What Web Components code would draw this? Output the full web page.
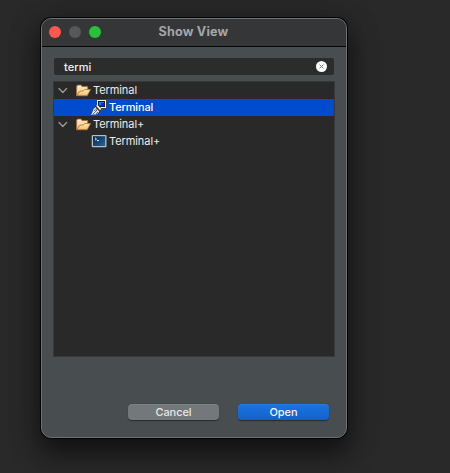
<!DOCTYPE html>
<html lang="en"><head><meta charset="utf-8"><title>Show View</title>
<style>
html,body{margin:0;height:100%;overflow:hidden}
body{background:#292929;font-family:Inter,"Liberation Sans",sans-serif;font-size:11px;color:#ececec;padding:18px 0 0 41px;box-sizing:border-box}
</style></head><body>
<dialog-window heading="Show View">
 <search-field value="termi"></search-field>
 <view-tree>
  <tree-row icon="folder" expanded>Terminal</tree-row>
  <tree-row icon="pen" selected>Terminal</tree-row>
  <tree-row icon="folder" expanded>Terminal+</tree-row>
  <tree-row icon="console">Terminal+</tree-row>
 </view-tree>
 <push-button slot="actions">Cancel</push-button>
 <push-button slot="actions" primary>Open</push-button>
</dialog-window>
<script>
class Base extends HTMLElement{
  connectedCallback(){ if(!this.shadowRoot) this.attachShadow({mode:'open'}).innerHTML=this.view(); }
}
customElements.define('dialog-window',class extends Base{view(){return `<style>
:host{display:flex;flex-direction:column;box-sizing:border-box;width:306px;height:420px;border:1px solid #6c7071;border-radius:10px;background:#484d4f;box-shadow:0 0 0 1px #050505,0 14px 26px 2px rgba(0,0,0,.5),0 2px 34px rgba(0,0,0,.22);overflow:hidden}
header{display:grid;grid-template-columns:76px 1fr 76px;height:27px;background:#353638;border-bottom:1px solid #050505;flex:none;align-items:center}
.lights{display:flex;gap:8px;padding-left:7px;margin-bottom:1px}
i{width:12px;height:12px;border-radius:50%;background:#ff5650}i+i{background:#57585a}i+i+i{background:#27c238}
h1{margin:-2px 0 0;font-size:12.6px;line-height:16px;font-weight:700;color:#a5a6a7;text-align:center;letter-spacing:.2px;padding-right:1px}
main{display:flex;flex-direction:column;gap:6px;padding:11px 11px 0}
footer{display:flex;justify-content:flex-end;gap:19px;padding:47px 17px 0 0}
</style><header><div class="lights"><i></i><i></i><i></i></div><h1>${this.getAttribute('heading')}</h1></header>
<main><slot></slot></main><footer><slot name="actions"></slot></footer>`}});
customElements.define('search-field',class extends Base{view(){return `<style>
:host{display:flex;align-items:center;justify-content:space-between;height:17px;margin:0 1px;padding:0 7px 0 10px;border-radius:2px;background:#2b2c2c;box-sizing:border-box;color:#f3f3f3}
span{line-height:17px;font-weight:500;letter-spacing:.05px;padding-top:1px}svg{width:11px;height:11px;margin-top:-1px}
</style><span>${this.getAttribute('value')}</span><svg viewBox="0 0 11 11"><circle cx="5.5" cy="5.5" r="5.5" fill="#fff"/><path d="M3.6 3.6l3.8 3.8M7.4 3.6L3.6 7.4" stroke="#777" stroke-width="1"/></svg>`}});
customElements.define('view-tree',class extends Base{view(){return `<style>
:host{display:block;box-sizing:border-box;height:276px;border:1px solid #363839;background:#292929}
</style><slot></slot>`}});
const icons={
folder:`<defs><linearGradient id="f" x2="0" y2="1"><stop stop-color="#ffe9b5"/><stop offset="1" stop-color="#f6bd6b"/></linearGradient></defs>
<g transform="translate(0 .5)"><path d="M1.5 13V3.8L2.5 2.6h3.6l1 1.4h5.6V7" fill="#f0c68a" stroke="#a9713a" stroke-width=".8"/><path d="M2.5 4.5h9.5v4H2.5z" fill="#fbdfab"/><path d="M3 3.2h2.8v1.6H3z" fill="#fff6dc"/><path d="M1.7 13.2L5 8.6h3l1.6-1.5h5.9L12.2 13.2z" fill="url(#f)" stroke="#b27b3b" stroke-width=".9" stroke-linejoin="round"/></g>`,
pen:`<path d="M15 1h1v8h-1v1H7V9h8z" fill="#4a4634"/><path d="M6 1h9v8H6z" fill="#fff6cf"/><path d="M7 2h7v6H7z" fill="#111b40"/><path d="M8 3h5v4H8z" fill="#0528f5"/><path d="M8 6h2V4h3V3H8z" fill="#286cff"/>
<path d="M1 15l1-3 2-4 1-2h2l3 3v2l-2 3-3 1z" fill="#302e20"/><path d="M.5 15.5l2-5.5 2-2 4 4-1.5 2.5-2.5 1z" fill="#deded6"/><path d="M5 6.8l1.5-.8 3.7 3.7-1 1.6z" fill="#fffbd7"/><path d="M4.8 8.5l3.7 3.7M3 12l4-3M2 15l4-4M5 15l2-2" stroke="#34332c" stroke-width=".7"/><path d="M.5 15.5l4-4" stroke="#fff" stroke-width="1"/>`,
console:`<defs><linearGradient id="c" x2="1" y2="1"><stop stop-color="#06294b"/><stop offset="1" stop-color="#23669b"/></linearGradient></defs>
<rect x=".7" y="2" width="14.8" height="12.2" rx="1" fill="#b9bdc2"/><rect x="2" y="3.2" width="12.2" height="9.8" fill="url(#c)"/><path d="M4 4.8L5.5 6 4 7.2M6 7.5h2" fill="none" stroke="#fff" stroke-width=".9"/>`};
customElements.define('tree-row',class extends Base{view(){const e=this.hasAttribute('expanded');return `<style>
:host{display:flex;align-items:center;height:17px;padding-left:4px;line-height:17px;letter-spacing:-.08px;color:#ececec}
:host([selected]){background:#004ccd;color:#fff;font-weight:500;letter-spacing:-.16px}
.twist{width:${e?17:33}px;height:17px;flex:none}.icon{width:16px;height:16px;margin:0 2px 1px 0;flex:none}
</style><svg class="twist" viewBox="0 0 ${e?17:33} 17">${e?'<path d="M1 6.5l3.8 4 3.8-4" fill="none" stroke="#9a9a9a" stroke-width="1.3" stroke-linecap="round" stroke-linejoin="round"/>':''}</svg><svg class="icon" viewBox="0 0 16 16">${icons[this.getAttribute('icon')]}</svg><span><slot></slot></span>`}});
customElements.define('push-button',class extends Base{view(){const p=this.hasAttribute('primary');return `<style>
:host{display:block;width:91px;flex:none}
button{display:block;width:91px;height:16px;padding:0;border:0;border-radius:4px;font:500 11px/16px Inter,"Liberation Sans",sans-serif;letter-spacing:-.08px;text-align:center;color:${p?'#f0f5ff':'#e6e7e7'};background:${p?'linear-gradient(#1a73e4,#1561c7)':'#74787a'};box-shadow:0 .5px 1px rgba(0,0,0,.45),inset 0 .5px 0 rgba(255,255,255,.14)}
</style><button><slot></slot></button>`}});
</script></body></html>
